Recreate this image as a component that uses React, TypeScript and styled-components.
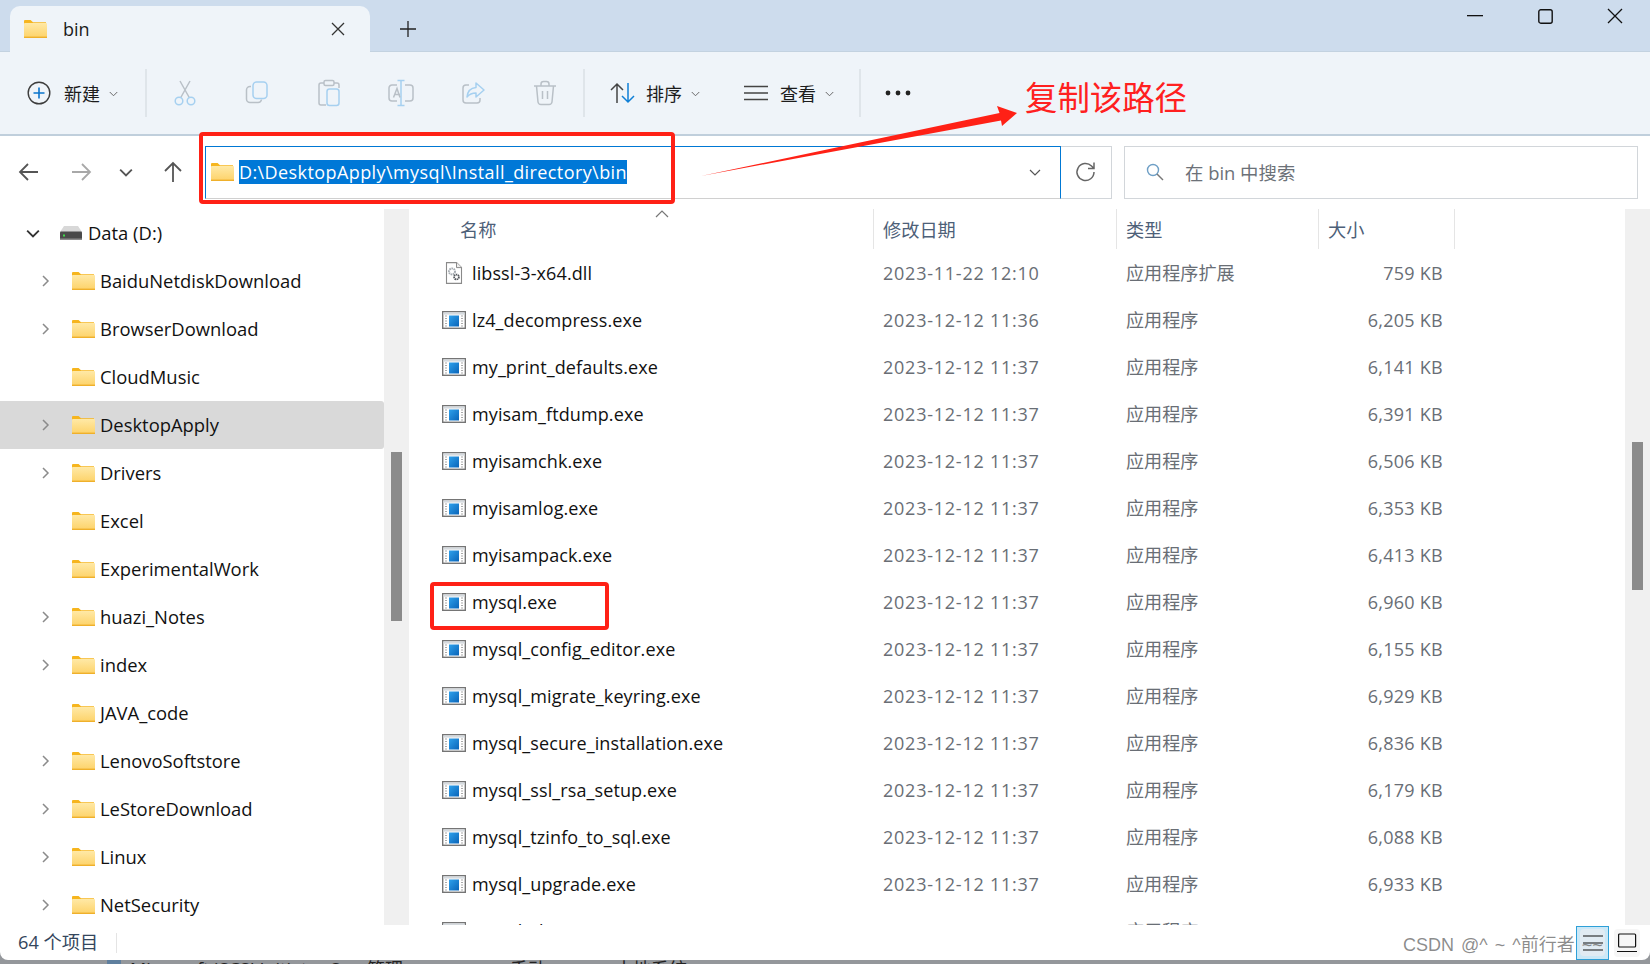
import React from "react";
import styled, { createGlobalStyle } from "styled-components";

const FONT = `"Open Sans", "Noto Sans CJK SC", sans-serif`;

const Global = createGlobalStyle`
  html, body { margin: 0; padding: 0; background: #8f9296; }
  body { font-family: ${FONT}; overflow: hidden; }
  * { box-sizing: border-box; }
`;

const Root = styled.div`
  position: relative;
  width: 1650px;
  height: 964px;
  overflow: hidden;
  background: #94979b;
  display: flex;
  flex-direction: column;
`;
const Win = styled.div`
  height: 960px;
  flex: none;
  display: flex;
  flex-direction: column;
  background: #fff;
  border-radius: 0 0 8px 8px;
  overflow: hidden;
`;
const TitleBar = styled.div`
  height: 52px;
  flex: none;
  background: #cddced;
  border-bottom: 1px solid #c3d2e0;
  padding: 6px 0 0 10px;
  display: flex;
  align-items: stretch;
`;
const Tab = styled.div`
  width: 360px;
  height: 46px;
  background: #eff4f9;
  border-radius: 10px 10px 0 0;
  display: flex;
  align-items: center;
  padding: 0 24px 0 14px;
  font-size: 18px;
  color: #1b1b1b;
`;
const TabTitle = styled.span`
  margin-left: 16px;
  flex: 1;
  font-weight: 500;
`;
const PlusBtn = styled.div`
  width: 40px;
  margin-left: 18px;
  display: flex;
  align-items: center;
  justify-content: center;
  height: 46px;
`;
const WinControls = styled.div`
  margin-left: auto;
  display: flex;
  margin-top: -6px;
  height: 32px;
`;
const WinBtn = styled.div`
  width: 70px;
  display: flex;
  align-items: center;
  justify-content: center;
`;
const Toolbar = styled.div`
  height: 84px;
  flex: none;
  background: #eff4f9;
  border-bottom: 2px solid #c0cfdc;
  display: flex;
  align-items: center;
  padding-left: 27px;
`;
const NewGroup = styled.div`
  width: 118px;
  display: flex;
  align-items: center;
  font-size: 18px;
  color: #1c1c1c;
`;
const Sep = styled.div<{ $ml?: number }>`
  width: 2px;
  height: 48px;
  background: #dfe5ea;
  margin-left: ${(p) => p.$ml ?? 0}px;
  margin-right: 2px;
`;
const ToolBtn = styled.div`
  width: 72px;
  display: flex;
  align-items: center;
  justify-content: center;
`;
const TextBtn = styled.div<{ $ml: number; $w: number }>`
  margin-left: ${(p) => p.$ml}px;
  width: ${(p) => p.$w}px;
  display: flex;
  align-items: center;
  font-size: 18px;
  color: #1c1c1c;
`;
const BtnLabel = styled.span<{ $ml: number }>`
  margin-left: ${(p) => p.$ml}px;
  margin-right: 9px;
  white-space: nowrap;
`;
const NavBar = styled.div`
  height: 73px;
  flex: none;
  background: #fff;
  display: flex;
  align-items: center;
  padding-bottom: 1px;
`;
const NavIcons = styled.div`
  width: 205px;
  height: 52px;
  display: flex;
  align-items: center;
`;
const NavBtn = styled.div<{ $w: number }>`
  width: ${(p) => p.$w}px;
  display: flex;
  align-items: center;
  justify-content: center;
`;
const AddressBox = styled.div`
  width: 856px;
  height: 53px;
  border: 1px solid #0078d4;
  border-bottom: 1px solid #d0d0d0;
  display: flex;
  align-items: center;
  padding-left: 5px;
`;
const Selection = styled.span`
  margin-left: 5px;
  height: 24px;
  line-height: 24px;
  background: #0078d7;
  color: #fff;
  font-size: 18px;
  white-space: nowrap;
  letter-spacing: 0.41px;
`;
const AddrChevron = styled.div`
  margin-left: auto;
  margin-right: 19px;
  display: flex;
`;
const RefreshBox = styled.div`
  width: 51px;
  height: 53px;
  border: 1px solid #d2d6da;
  border-left: none;
  display: flex;
  align-items: center;
  justify-content: center;
`;
const SearchBox = styled.div`
  width: 514px;
  height: 53px;
  margin-left: 12px;
  border: 1px solid #d2d6da;
  display: flex;
  align-items: center;
  padding-left: 21px;
  font-size: 18.4px;
  color: #6c7178;
`;
const SearchText = styled.span`
  margin-left: 21px;
  margin-top: -1px;
`;
const Body = styled.div`
  flex: none;
  height: 716px;
  display: flex;
  overflow: hidden;
`;
const Sidebar = styled.div`
  width: 384px;
  flex: none;
  overflow: hidden;
`;
const TreeRow = styled.div<{ $sel?: boolean; $level: number }>`
  height: 48px;
  display: flex;
  align-items: center;
  font-size: 18.4px;
  color: #111;
  padding-left: ${(p) => (p.$level === 0 ? 26 : 39)}px;
  background: ${(p) => (p.$sel ? "#d9d9d9" : "transparent")};
  border-radius: 0 3px 3px 0;
`;
const ChevronSlot = styled.div<{ $w: number }>`
  width: ${(p) => p.$w}px;
  flex: none;
  display: flex;
  align-items: center;
`;
const TreeLabel = styled.span<{ $ml: number }>`
  margin-left: ${(p) => p.$ml}px;
  margin-top: -1px;
  white-space: nowrap;
`;
const Track = styled.div<{ $w: number }>`
  width: ${(p) => p.$w}px;
  flex: none;
  background: #f0f0f0;
  display: flex;
  justify-content: center;
`;
const Thumb = styled.div<{ $top: number; $h: number }>`
  width: 11px;
  height: ${(p) => p.$h}px;
  margin-top: ${(p) => p.$top}px;
  background: #8b8b8b;
`;
const Gap = styled.div`
  width: 2px;
  flex: none;
  background: #fff;
`;
const Pane = styled.div`
  flex: 1;
  min-width: 0;
  overflow: hidden;
  background: #fff;
`;
const HeaderRow = styled.div`
  position: relative;
  height: 40px;
  display: grid;
  grid-template-columns: 463px 243px 202px 136px;
  font-size: 18.2px;
  color: #4d6078;
`;
const HeaderCell = styled.div<{ $pl: number }>`
  padding-left: ${(p) => p.$pl}px;
  border-right: 1px solid #e5e5e5;
  display: flex;
  align-items: center;
  padding-bottom: 1px;
`;
const SortCaret = styled.svg`
  position: absolute;
  left: 244px;
  top: 0px;
`;
const FileRow = styled.div`
  height: 47px;
  display: grid;
  grid-template-columns: 463px 243px 202px 124px;
  align-items: center;
  font-size: 18px;
`;
const NameCell = styled.div`
  display: flex;
  align-items: center;
  padding-left: 31px;
  color: #111;
  white-space: nowrap;
`;
const NameText = styled.span`
  margin-left: 6px;
  letter-spacing: 0.1px;
`;
const DateCell = styled.div`
  padding-left: 9px;
  color: #696e75;
  white-space: nowrap;
  letter-spacing: 0.76px;
`;
const TypeCell = styled.div`
  padding-left: 9px;
  color: #696e75;
  white-space: nowrap;
  font-size: 18.1px;
  margin-top: -1px;
`;
const SizeCell = styled.div`
  text-align: right;
  color: #696e75;
  white-space: nowrap;
  letter-spacing: 0.26px;
`;
const StatusBar = styled.div`
  flex: none;
  height: 35px;
  display: flex;
  align-items: center;
  padding-left: 18px;
  font-size: 18.2px;
  color: #34465c;
`;
const StatusLabel = styled.span`
  margin-top: -3px;
`;
const StatusSep = styled.div`
  width: 1px;
  height: 20px;
  margin-left: 18px;
  background: #e4e4e4;
`;
const ViewButtons = styled.div`
  margin-left: auto;
  display: flex;
  align-items: center;
  height: 35px;
  padding-right: 10px;
`;
const ViewActive = styled.div`
  width: 33px;
  height: 34px;
  background: #cbe8f7;
  border: 1px solid #2ea0d8;
  display: flex;
  align-items: center;
  justify-content: center;
`;
const ViewInner = styled.div`
  width: 25px;
  height: 27px;
  background: #e1ebf3;
  border-radius: 4px;
  display: flex;
  align-items: center;
  justify-content: center;
`;
const ViewPlain = styled.div`
  width: 26px;
  height: 28px;
  margin-left: 5px;
  background: #f6f6f6;
  border-radius: 4px;
  display: flex;
  align-items: center;
  justify-content: center;
`;
const BehindStrip = styled.div`
  height: 4px;
  flex: none;
  overflow: hidden;
  display: flex;
  font-size: 18px;
  line-height: 18px;
  color: #222;
  padding-left: 107px;
`;
const BehindIcon = styled.div`
  width: 14px;
  height: 4px;
  margin-right: 9px;
  flex: none;
  background: #5f7f9e;
`;
const BehindText = styled.span<{ $w: number }>`
  width: ${(p) => p.$w}px;
  flex: none;
  white-space: nowrap;
  overflow: hidden;
`;
const RedBox = styled.div<{ $x: number; $y: number; $w: number; $h: number }>`
  position: absolute;
  left: ${(p) => p.$x}px;
  top: ${(p) => p.$y}px;
  width: ${(p) => p.$w}px;
  height: ${(p) => p.$h}px;
  border: 4.5px solid #ff2116;
  border-radius: 4px;
  pointer-events: none;
`;
const Annotation = styled.div`
  position: absolute;
  left: 1025px;
  top: 72px;
  font-size: 32.4px;
  line-height: 48px;
  color: #ff2020;
  font-family: "Noto Sans CJK SC", sans-serif;
  white-space: nowrap;
`;
const ArrowSvg = styled.svg`
  position: absolute;
  left: 690px;
  top: 95px;
`;
const Watermark = styled.div`
  position: absolute;
  left: 1403px;
  top: 930px;
  font-size: 18px;
  line-height: 30px;
  font-family: "Liberation Sans", "Noto Sans CJK SC", sans-serif;
  color: rgba(95, 95, 95, 0.72);
  white-space: nowrap;
  pointer-events: none;
  word-spacing: 2px;
`;

const Folder = () => (
  <svg width={23} height={18} viewBox="0 0 23 18" style={{ flex: "none" }}>
    <defs>
      <linearGradient id="fg" x1="0" y1="0" x2="0" y2="1">
        <stop offset="0" stopColor="#ffe9a6" />
        <stop offset="1" stopColor="#fdd268" />
      </linearGradient>
    </defs>
    <path d="M0 1.2C0 .5.5 0 1.2 0h5.4l2.4 2.2h13v2H0z" fill="#f6b51e" />
    <rect x="0" y="3" width="23" height="15" rx="0.8" fill="url(#fg)" />
    <rect x="0" y="16.6" width="23" height="1.4" fill="#efb02b" />
  </svg>
);

const Drive = () => (
  <svg width="22" height="14" viewBox="0 0 22 14" style={{ flex: "none" }}>
    <path d="M4 0h14l4 6H0z" fill="#d8d8d8" />
    <rect x="0" y="5.5" width="22" height="8.5" rx="1" fill="#4a4a4a" />
    <rect x="3" y="8.5" width="2" height="2" fill="#3fdc4a" />
    <rect x="0" y="12.5" width="22" height="1.5" fill="#8c8c8c" />
  </svg>
);

const ExeIcon = () => (
  <svg width="24" height="18" viewBox="0 0 24 18" style={{ flex: "none" }}>
    <rect x="0.7" y="0.7" width="22.6" height="16.6" fill="#fff" stroke="#757575" strokeWidth="1.4" />
    <rect x="1.4" y="1.4" width="21.2" height="2.2" fill="#d5dade" />
    <path d="M3 5h2M3 7.5h2M3 10h2M3 12.5h2M3 15h2M19 5h2M19 7.5h2M19 10h2M19 12.5h2M19 15h2" stroke="#a9a9a9" strokeWidth="1" />
    <defs>
      <linearGradient id="ex" x1="0" y1="0" x2="1" y2="1">
        <stop offset="0" stopColor="#2ea1ec" />
        <stop offset="1" stopColor="#0a64b8" />
      </linearGradient>
    </defs>
    <rect x="7" y="4.5" width="10" height="11" fill="url(#ex)" />
  </svg>
);

const DllIcon = () => (
  <svg width="24" height="22" viewBox="0 0 24 22" style={{ flex: "none" }}>
    <path d="M4.5 .6h10l5 5v15.8h-15z" fill="#fff" stroke="#8a8a8a" strokeWidth="1.1" />
    <path d="M14.5 .6v5h5" fill="#eee" stroke="#8a8a8a" strokeWidth="1" />
    <circle cx="10" cy="9.5" r="3" fill="none" stroke="#a7adb3" strokeWidth="2" strokeDasharray="1.6 .6" />
    <circle cx="14.5" cy="15" r="2.4" fill="none" stroke="#55595e" strokeWidth="1.8" strokeDasharray="1.4 .5" />
  </svg>
);

const Chevron = ({ dir, size = 12, color = "#8b8b8b", w = 1.6 }: { dir: "r" | "d" | "u"; size?: number; color?: string; w?: number }) => {
  const d = dir === "r" ? "M4 1l5 5-5 5" : dir === "d" ? "M1 4l5 5 5-5" : "M1 8l5-5 5 5";
  return (
    <svg width={size} height={size} viewBox="0 0 12 12" fill="none" stroke={color} strokeWidth={w} style={{ flex: "none" }}>
      <path d={d} />
    </svg>
  );
};

const Arrow = ({ dir, color }: { dir: "l" | "r" | "u"; color: string }) => {
  const d = dir === "l" ? "M21 12H3M11 4l-8 8 8 8" : dir === "r" ? "M3 12h18M13 4l8 8-8 8" : "M12 22V3M4 11l8-8 8 8";
  return (
    <svg width="24" height="24" viewBox="0 0 24 24" fill="none" stroke={color} strokeWidth="1.8" style={{ flex: "none" }}>
      <path d={d} />
    </svg>
  );
};

const GREY = "#b9c0c7";
const BLUE = "#a6d0f0";

const ToolIcons: Record<string, React.ReactNode> = {
  cut: (
    <svg width="24" height="26" viewBox="0 0 24 26" fill="none" strokeWidth="1.5">
      <path d="M7.5 18L17 1M16.5 18L7 1" stroke={GREY} />
      <circle cx="6" cy="21" r="3.8" stroke={BLUE} />
      <circle cx="18" cy="21" r="3.8" stroke={BLUE} />
    </svg>
  ),
  copy: (
    <svg width="24" height="26" viewBox="0 0 24 26" fill="none" strokeWidth="1.5">
      <path d="M6 6.5H5a3.5 3.5 0 0 0-3.5 3.5V19A3.5 3.5 0 0 0 5 22.5h8a3.5 3.5 0 0 0 3.5-3" stroke={GREY} />
      <rect x="8" y="2" width="14" height="16.5" rx="3.5" stroke={BLUE} />
    </svg>
  ),
  paste: (
    <svg width="24" height="28" viewBox="0 0 24 28" fill="none" strokeWidth="1.5">
      <path d="M7 4H4a2 2 0 0 0-2 2v18a2 2 0 0 0 2 2h5M17 4h3a2 2 0 0 1 2 2v3" stroke={GREY} />
      <rect x="7" y="1.5" width="10" height="5" rx="1.5" stroke={GREY} />
      <rect x="10" y="10" width="12" height="16.5" rx="2.5" stroke={BLUE} />
    </svg>
  ),
  rename: (
    <svg width="26" height="28" viewBox="0 0 26 28" fill="none" strokeWidth="1.5">
      <path d="M9 6H4a3 3 0 0 0-3 3v10a3 3 0 0 0 3 3h5M17 6h5a3 3 0 0 1 3 3v10a3 3 0 0 1-3 3h-5" stroke={GREY} />
      <path d="M13 2v24M9.5 1.5h7M9.5 26.5h7" stroke={BLUE} />
      <path d="M5.5 18.5L9 9.5l3 9M7 15.5h5" stroke={GREY} />
    </svg>
  ),
  share: (
    <svg width="24" height="24" viewBox="0 0 24 24" fill="none" strokeWidth="1.5">
      <path d="M8 4H5a3 3 0 0 0-3 3v12a3 3 0 0 0 3 3h11a3 3 0 0 0 3-3v-2" stroke={GREY} />
      <path d="M15 2l8 7-8 7v-4c-4 0-6.5 1-9 4 .5-5.5 3.5-9 9-9.5z" stroke={BLUE} strokeLinejoin="round" />
    </svg>
  ),
  del: (
    <svg width="24" height="26" viewBox="0 0 24 26" fill="none" strokeWidth="1.5" stroke={GREY}>
      <path d="M1 6h22M8 6V4a2.5 2.5 0 0 1 2.5-2.5h3A2.5 2.5 0 0 1 16 4v2M3.5 6l1.5 16a3 3 0 0 0 3 2.5h8a3 3 0 0 0 3-2.5L20.5 6M9.5 11v8M14.5 11v8" />
    </svg>
  ),
};

const tree: { n: string; c: boolean; sel?: boolean }[] = [
  { n: "BaiduNetdiskDownload", c: true },
  { n: "BrowserDownload", c: true },
  { n: "CloudMusic", c: false },
  { n: "DesktopApply", c: true, sel: true },
  { n: "Drivers", c: true },
  { n: "Excel", c: false },
  { n: "ExperimentalWork", c: false },
  { n: "huazi_Notes", c: true },
  { n: "index", c: true },
  { n: "JAVA_code", c: false },
  { n: "LenovoSoftstore", c: true },
  { n: "LeStoreDownload", c: true },
  { n: "Linux", c: true },
  { n: "NetSecurity", c: true },
];

const files: [string, string, string][] = [
  ["libssl-3-x64.dll", "2023-11-22 12:10", "759 KB"],
  ["lz4_decompress.exe", "2023-12-12 11:36", "6,205 KB"],
  ["my_print_defaults.exe", "2023-12-12 11:37", "6,141 KB"],
  ["myisam_ftdump.exe", "2023-12-12 11:37", "6,391 KB"],
  ["myisamchk.exe", "2023-12-12 11:37", "6,506 KB"],
  ["myisamlog.exe", "2023-12-12 11:37", "6,353 KB"],
  ["myisampack.exe", "2023-12-12 11:37", "6,413 KB"],
  ["mysql.exe", "2023-12-12 11:37", "6,960 KB"],
  ["mysql_config_editor.exe", "2023-12-12 11:37", "6,155 KB"],
  ["mysql_migrate_keyring.exe", "2023-12-12 11:37", "6,929 KB"],
  ["mysql_secure_installation.exe", "2023-12-12 11:37", "6,836 KB"],
  ["mysql_ssl_rsa_setup.exe", "2023-12-12 11:37", "6,179 KB"],
  ["mysql_tzinfo_to_sql.exe", "2023-12-12 11:37", "6,088 KB"],
  ["mysql_upgrade.exe", "2023-12-12 11:37", "6,933 KB"],
  ["mysqladmin.exe", "2023-12-12 11:37", "6,043 KB"],
];

export default function App() {
  return (
    <Root>
      <Global />
      <Win>
        <TitleBar>
          <Tab>
            <Folder />
            <TabTitle>bin</TabTitle>
            <svg width="16" height="16" viewBox="0 0 16 16" stroke="#333" strokeWidth="1.3">
              <path d="M2 2l12 12M14 2L2 14" />
            </svg>
          </Tab>
          <PlusBtn>
            <svg width="16" height="16" viewBox="0 0 16 16" stroke="#222" strokeWidth="1.3">
              <path d="M8 0v16M0 8h16" />
            </svg>
          </PlusBtn>
          <WinControls>
            <WinBtn>
              <svg width="16" height="2" viewBox="0 0 16 2"><rect width="16" height="1.3" fill="#111" /></svg>
            </WinBtn>
            <WinBtn>
              <svg width="15" height="15" viewBox="0 0 15 15" fill="none" stroke="#111" strokeWidth="1.4"><rect x=".8" y=".8" width="13.4" height="13.4" rx="2" /></svg>
            </WinBtn>
            <WinBtn>
              <svg width="16" height="16" viewBox="0 0 16 16" stroke="#111" strokeWidth="1.3"><path d="M1 1l14 14M15 1L1 15" /></svg>
            </WinBtn>
          </WinControls>
        </TitleBar>

        <Toolbar>
          <NewGroup>
            <svg width="24" height="24" viewBox="0 0 24 24" fill="none" style={{ flex: "none" }}>
              <circle cx="12" cy="12" r="10.8" stroke="#3d3d3d" strokeWidth="1.4" />
              <path d="M12 6.5v11M6.5 12h11" stroke="#0a74cc" strokeWidth="1.6" />
            </svg>
            <BtnLabel $ml={13}>新建</BtnLabel>
            <Chevron dir="d" size={9} w={1.3} color="#666" />
          </NewGroup>
          <Sep />
          <ToolBtn>{ToolIcons.cut}</ToolBtn>
          <ToolBtn>{ToolIcons.copy}</ToolBtn>
          <ToolBtn>{ToolIcons.paste}</ToolBtn>
          <ToolBtn>{ToolIcons.rename}</ToolBtn>
          <ToolBtn>{ToolIcons.share}</ToolBtn>
          <ToolBtn>{ToolIcons.del}</ToolBtn>
          <Sep $ml={2} />
          <TextBtn $ml={23} $w={118}>
            <svg width="26" height="22" viewBox="0 0 26 22" fill="none" strokeWidth="1.5" style={{ flex: "none" }}>
              <path d="M7 21V2M1 8l6-6 6 6" stroke="#444" />
              <path d="M18 1v19M12 14l6 6 6-6" stroke="#0f7fd6" />
            </svg>
            <BtnLabel $ml={10}>排序</BtnLabel>
            <Chevron dir="d" size={9} w={1.3} color="#666" />
          </TextBtn>
          <TextBtn $ml={16} $w={115}>
            <svg width="24" height="16" viewBox="0 0 24 16" stroke="#444" strokeWidth="1.5" style={{ flex: "none" }}>
              <path d="M0 1.5h24M0 8h24M0 14.5h24" />
            </svg>
            <BtnLabel $ml={12}>查看</BtnLabel>
            <Chevron dir="d" size={9} w={1.3} color="#666" />
          </TextBtn>
          <Sep />
          <TextBtn $ml={22} $w={30}>
            <svg width="26" height="6" viewBox="0 0 26 6" fill="#222"><circle cx="3" cy="3" r="2.4" /><circle cx="13" cy="3" r="2.4" /><circle cx="23" cy="3" r="2.4" /></svg>
          </TextBtn>
        </Toolbar>

        <NavBar>
          <NavIcons>
            <NavBtn $w={58}><Arrow dir="l" color="#555" /></NavBtn>
            <NavBtn $w={46}><Arrow dir="r" color="#a8a8a8" /></NavBtn>
            <NavBtn $w={44}><Chevron dir="d" size={14} w={1.6} color="#555" /></NavBtn>
            <NavBtn $w={50}><Arrow dir="u" color="#555" /></NavBtn>
          </NavIcons>
          <AddressBox>
            <Folder />
            <Selection>D:\DesktopApply\mysql\Install_directory\bin</Selection>
            <AddrChevron><Chevron dir="d" size={12} w={1.2} color="#555" /></AddrChevron>
          </AddressBox>
          <RefreshBox>
            <svg width="22" height="22" viewBox="0 0 22 22" fill="none" stroke="#666" strokeWidth="1.5">
              <path d="M19 11a8.5 8.5 0 1 1-2.5-6L19 7.5M19 1.5v6h-6" />
            </svg>
          </RefreshBox>
          <SearchBox>
            <svg width="18" height="18" viewBox="0 0 18 18" fill="none" strokeWidth="1.4" style={{ flex: "none" }}>
              <circle cx="7" cy="7" r="5.5" stroke="#6e9fc6" />
              <path d="M11 11l6 6" stroke="#777" />
            </svg>
            <SearchText>在 bin 中搜索</SearchText>
          </SearchBox>
        </NavBar>

        <Body>
          <Sidebar>
            <TreeRow $level={0}>
              <ChevronSlot $w={34}><Chevron dir="d" size={14} w={1.6} color="#333" /></ChevronSlot>
              <Drive />
              <TreeLabel $ml={6}>Data (D:)</TreeLabel>
            </TreeRow>
            {tree.map((t) => (
              <TreeRow key={t.n} $level={1} $sel={t.sel}>
                <ChevronSlot $w={33}>{t.c && <Chevron dir="r" size={12} w={1.5} />}</ChevronSlot>
                <Folder />
                <TreeLabel $ml={5}>{t.n}</TreeLabel>
              </TreeRow>
            ))}
          </Sidebar>
          <Track $w={25}><Thumb $top={243} $h={169} /></Track>
          <Gap />
          <Pane>
            <HeaderRow>
              <HeaderCell $pl={49}>名称</HeaderCell>
              <HeaderCell $pl={9}>修改日期</HeaderCell>
              <HeaderCell $pl={9}>类型</HeaderCell>
              <HeaderCell $pl={9}>大小</HeaderCell>
              <SortCaret width="14" height="10" viewBox="0 0 14 10" fill="none" stroke="#777" strokeWidth="1.2">
                <path d="M1 8l6-6 6 6" />
              </SortCaret>
            </HeaderRow>
            {files.map((f, i) => (
              <FileRow key={f[0]}>
                <NameCell>
                  {i === 0 ? <DllIcon /> : <ExeIcon />}
                  <NameText>{f[0]}</NameText>
                </NameCell>
                <DateCell>{f[1]}</DateCell>
                <TypeCell>{i === 0 ? "应用程序扩展" : "应用程序"}</TypeCell>
                <SizeCell>{f[2]}</SizeCell>
              </FileRow>
            ))}
          </Pane>
          <Track $w={25}><Thumb $top={233} $h={148} /></Track>
        </Body>

        <StatusBar>
          <StatusLabel>64 个项目</StatusLabel>
          <StatusSep />
          <ViewButtons>
            <ViewActive>
              <ViewInner>
                <svg width="20" height="18" viewBox="0 0 20 18" stroke="#111" strokeWidth="1.2"><path d="M0 2h20M0 9h20M0 16h20" /></svg>
              </ViewInner>
            </ViewActive>
            <ViewPlain>
              <svg width="20" height="20" viewBox="0 0 20 20" fill="none" stroke="#111" strokeWidth="1.2"><rect x="1.6" y="1" width="17" height="13" rx="1" /><path d="M0 18.5h20" /></svg>
            </ViewPlain>
          </ViewButtons>
        </StatusBar>
      </Win>
      <BehindStrip>
        <BehindIcon />
        <BehindText $w={237}>Microsoft iSCSI Initiator Service</BehindText>
        <BehindText $w={143}>管理</BehindText>
        <BehindText $w={105}>手动</BehindText>
        <BehindText $w={120}>本地系统</BehindText>
      </BehindStrip>

      <RedBox $x={199} $y={132} $w={476} $h={72} />
      <RedBox $x={430} $y={582} $w={179} $h={48} />
      <ArrowSvg width="335" height="90" viewBox="690 95 335 90">
        <path d="M701 176L999.5 113L997 106L1017 113L1002 126L1001 120.5Z" fill="#ff2116" />
      </ArrowSvg>
      <Annotation>复制该路径</Annotation>
      <Watermark>CSDN @^ ~ ^前行者 ~~</Watermark>
    </Root>
  );
}
